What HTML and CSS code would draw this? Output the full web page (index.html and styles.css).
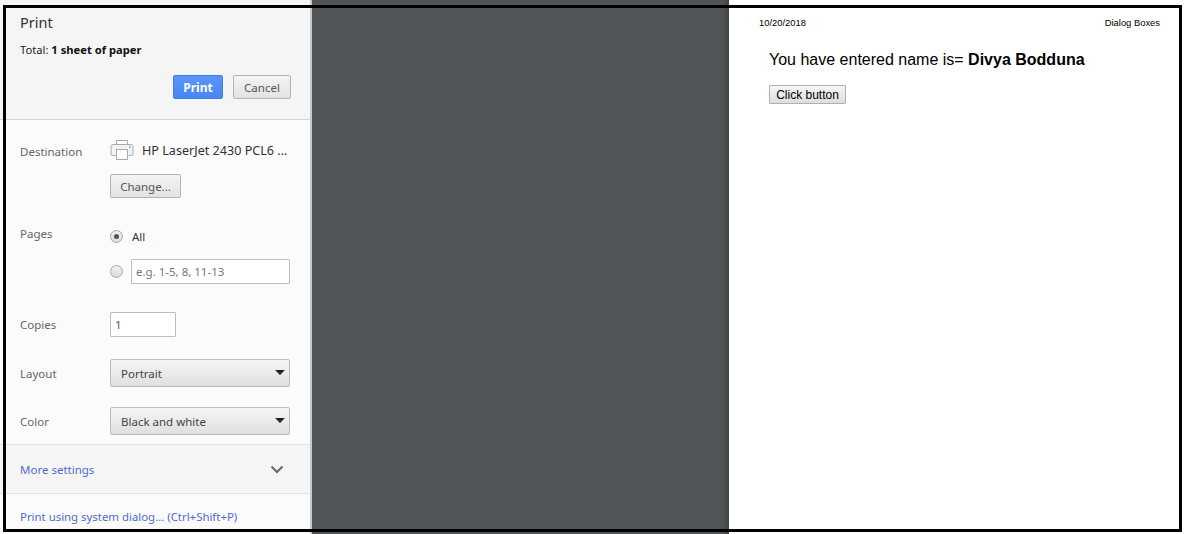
FILE: index.html
```html
<!DOCTYPE html>
<html lang="en">
<head>
    <meta charset="UTF-8">
    <meta name="viewport" content="width=device-width, initial-scale=1.0">
    <title>Print</title>
    <link rel="stylesheet" href="styles.css">
</head>
<body>
    <div class="sidebar">
        <div class="head">
            <h1>Print</h1>
            <p class="total">Total: <b>1 sheet of paper</b></p>
            <div class="actions">
                <button class="btn btn-print">Print</button>
                <button class="btn btn-cancel">Cancel</button>
            </div>
        </div>

        <div class="settings">
            <div class="row row-dest">
                <div class="label">Destination</div>
                <div class="control">
                    <div class="dest">
                        <svg class="printer" width="24" height="22" viewBox="0 0 24 22" fill="none">
                            <path d="M6.5 5.5V1.5h11v4" fill="#fff" stroke="#aaa"/>
                            <path d="M5.5 16.5H3a2 2 0 0 1-2-2V7.5a2 2 0 0 1 2-2h18a2 2 0 0 1 2 2v7a2 2 0 0 1-2 2h-2.500" fill="#f3f3f3" stroke="#aaa"/>
                            <rect x="6.500" y="10.500" width="11" height="10" fill="#fff" stroke="#aaa"/>
                            <rect x="19" y="7" width="2" height="2" fill="#bbb"/>
                        </svg>
                        <span class="dest-name">HP LaserJet 2430 PCL6 ...</span>
                    </div>
                    <button class="btn btn-change">Change...</button>
                </div>
            </div>

            <div class="row row-pages">
                <div class="label">Pages</div>
                <div class="control">
                    <div class="page-opt">
                        <span class="radio radio-on"></span>
                        <span class="all">All</span>
                    </div>
                    <div class="page-opt page-opt-range">
                        <span class="radio"></span>
                        <div class="field field-range placeholder">e.g. 1-5, 8, 11-13</div>
                    </div>
                </div>
            </div>

            <div class="row row-copies">
                <div class="label">Copies</div>
                <div class="control">
                    <div class="field field-copies">1</div>
                </div>
            </div>

            <div class="row row-layout">
                <div class="label">Layout</div>
                <div class="control">
                    <div class="select">Portrait</div>
                </div>
            </div>

            <div class="row row-color">
                <div class="label">Color</div>
                <div class="control">
                    <div class="select">Black and white</div>
                </div>
            </div>
        </div>

        <div class="more">
            <a class="link">More settings</a>
            <svg width="14" height="9" viewBox="0 0 14 9" fill="none">
                <path d="M1.500 1.500L7 7l5.500-5.500" stroke="#666" stroke-width="2"/>
            </svg>
        </div>

        <div class="system">
            <a class="link">Print using system dialog... (Ctrl+Shift+P)</a>
        </div>
    </div>

    <div class="preview"></div>

    <div class="page">
        <div class="page-head">
            <span>10/20/2018</span>
            <span>Dialog Boxes</span>
        </div>
        <div class="page-body">
            <p class="entered">You have entered name is= <b>Divya Bodduna</b></p>
            <button class="click-btn">Click button</button>
        </div>
    </div>

    <div class="frame"></div>
</body>
</html>
```

FILE: styles.css
```css
* { box-sizing: border-box; }
html, body { height: 100%; }
body { display: flex; margin: 0; height: 534px; overflow: hidden; font-family: "Noto Sans", sans-serif; font-size: 11.500px; color: #444; background: #fff; }

.sidebar { width: 312px; flex-shrink: 0; border-right: 2px solid #c8c8c8; background: #fbfbfb; display: flex; flex-direction: column; }
.head { height: 120px; padding: 13px 20px 0; background: #f5f5f5; border-bottom: 1px solid #d4d4d4; }
h1 { margin: 0; font-size: 14.500px; line-height: 18px; font-weight: 400; color: #333; }
.total { margin: 10px 0 0; font-size: 11.200px; line-height: 18px; color: #222; }
.total b { color: #111; }
.actions { display: flex; justify-content: flex-end; gap: 10px; margin: 16px -1px 0 0; }

.btn { height: 24px; padding: 0; border: 1px solid #b4b4b4; border-radius: 2px; background: linear-gradient(#f4f4f4, #e2e2e2); font-family: inherit; font-size: 11.500px; color: #555; }
.btn-print { width: 50px; border-color: #3d7fe0; background: linear-gradient(#5b95f9, #4687f4); color: #fff; font-weight: 700; font-size: 12px; }
.btn-cancel { width: 58px; }
.btn-change { display: block; width: 71px; margin-top: 13px; }

.settings { flex: 1; padding: 0 20px; }
.row { display: flex; }
.label { width: 90px; flex-shrink: 0; color: #666; line-height: 18px; }
.control { width: 180px; }

.row-dest { padding-top: 19px; }
.row-dest .label { margin-top: 4px; }
.dest { display: flex; align-items: center; gap: 8px; height: 22px; }
.dest-name { padding-top: 1px; font-size: 12.600px; color: #333; white-space: nowrap; }

.row-pages { padding-top: 32px; }
.row-pages .label { margin-top: -5px; }
.page-opt { display: flex; align-items: center; height: 13px; }
.page-opt-range { margin-top: 16px; height: 25px; }
.radio { width: 13px; height: 13px; margin-right: 8px; flex-shrink: 0; border: 1px solid #aaa; border-radius: 50%; background: linear-gradient(#f0f0f0, #dcdcdc); display: flex; align-items: center; justify-content: center; }
.radio-on::after { content: ""; width: 5px; height: 5px; border-radius: 50%; background: #555; }
.all { margin-left: 1px; color: #333; }

.field { height: 25px; border: 1px solid #bdbdbd; border-radius: 1px; background: #fff; padding-left: 4px; line-height: 23px; }
.field-range { width: 159px; }
.placeholder { color: #777; }
.field-copies { width: 66px; color: #555; }
.row-copies { padding-top: 28px; align-items: center; }

.row-layout { padding-top: 22px; align-items: center; }
.row-color { padding-top: 20px; align-items: center; }
.row-layout .label, .row-color .label { padding-top: 1px; }
.select { position: relative; height: 28px; padding-left: 10px; border: 1px solid #bdbdbd; border-radius: 2px; background: linear-gradient(#f4f4f4, #e0e0e0); color: #444; line-height: 27px; }
.select::after { content: ""; position: absolute; top: 10px; right: 4px; border: 5px solid transparent; border-top: 5px solid #222; border-bottom: 0; }

.link { color: #4f6bd0; }
.more { display: flex; align-items: center; justify-content: space-between; height: 50px; padding: 0 26px 0 20px; background: #f5f5f5; border-top: 1px solid #e2e2e2; border-bottom: 1px solid #e2e2e2; }
.system { height: 40px; padding: 14px 20px 0; line-height: 18px; font-size: 11.400px; }

.preview { width: 417px; flex-shrink: 0; background: #525659; box-shadow: inset -6px 0 6px -4px rgba(0, 0, 0, 0.3); }

.page { flex: 1; background: #fff; padding: 16px 24px 0 30px; font-family: "Liberation Sans", Arial, sans-serif; color: #000; }
.page-head { display: flex; justify-content: space-between; font-size: 9.400px; line-height: 13px; }
.page-body { padding: 19px 0 0 10px; }
.entered { margin: 0; font-size: 16px; line-height: 24px; }
.click-btn { display: block; width: 77px; height: 19px; margin-top: 13px; padding: 0; border: 1px solid #b0b0b0; border-radius: 1px; background: linear-gradient(#f6f6f6, #dedede); font-family: inherit; font-size: 12px; color: #000; }

.frame { position: absolute; left: 3px; top: 5px; width: 1179px; height: 527px; border: 3px solid #000; pointer-events: none; }
```
